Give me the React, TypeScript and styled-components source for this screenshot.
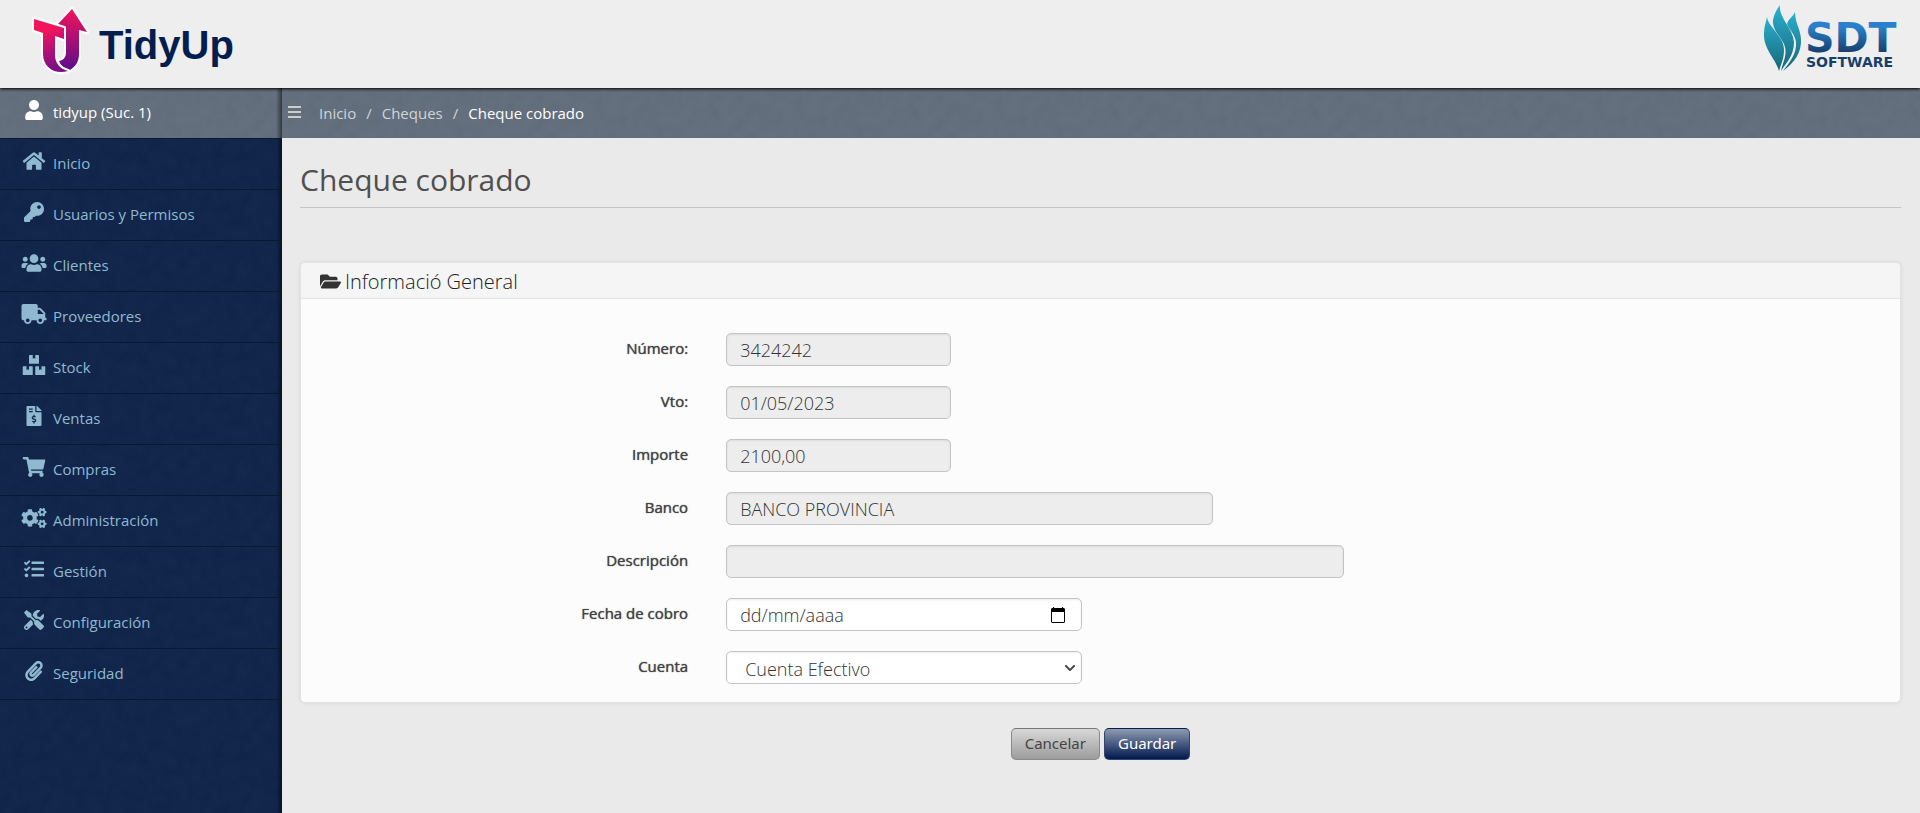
import React from 'react';
import styled, { createGlobalStyle } from 'styled-components';
import {
  FaUser, FaHome, FaKey, FaUsers, FaTruck, FaBoxes, FaFileInvoiceDollar,
  FaShoppingCart, FaCogs, FaTasks, FaTools, FaPaperclip, FaFolderOpen, FaChevronDown,
} from 'react-icons/fa';

const grain = (opacity: number) =>
  `url("data:image/svg+xml,${encodeURIComponent(
    `<svg xmlns='http://www.w3.org/2000/svg' width='200' height='200'><filter id='n'><feTurbulence type='fractalNoise' baseFrequency='.08' numOctaves='3' stitchTiles='stitch'/><feColorMatrix values='1 0 0 0 0 1 0 0 0 0 1 0 0 0 0 0 0 0 0 1'/></filter><rect width='200' height='200' filter='url(#n)' opacity='${opacity}'/></svg>`,
  )}")`;

const GlobalStyle = createGlobalStyle`
  *, *::before, *::after { box-sizing: border-box; }
  body {
    margin: 0;
    background: #eaeaea;
    color: #444;
    font-family: 'Open Sans', 'Noto Sans', sans-serif;
    font-size: 15px;
    line-height: 20px;
  }
  button, input, select { font-family: inherit; }
`;

const Page = styled.div`
  display: flex;
  flex-direction: column;
  min-height: 100vh;
`;

const Header = styled.header`
  position: relative;
  z-index: 1;
  display: flex;
  justify-content: space-between;
  align-items: flex-start;
  height: 88px;
  padding: 0 18px 0 28px;
  background: #eee;
  box-shadow: 0 1px 3px #000;
`;

const LogoLink = styled.a`
  display: block;
  svg { display: block; }
`;

const Body = styled.div`
  display: grid;
  grid-template-columns: 282px 1fr;
  flex: 1;
`;

const Sidebar = styled.aside`
  background-color: #0b2048;
  background-image: linear-gradient(to left, rgba(0, 0, 0, 0.55), transparent 6px), ${grain(0.035)};
`;

const Bar = styled.div`
  display: flex;
  align-items: center;
  height: 50px;
  padding-bottom: 1px;
  background-color: #5e6b79;
  background-image: ${grain(0.045)};
`;

const UserBar = styled(Bar)`
  padding: 0 0 2px 21px;
  color: #fff;
  background-image: linear-gradient(to left, rgba(0, 0, 0, 0.5), transparent 6px), ${grain(0.045)};
`;

const IconSlot = styled.span`
  display: flex;
  justify-content: center;
  width: 26px;
  margin-right: 6px;
  padding-bottom: 4px;
  svg { width: 26px; height: 20px; }
`;

const Menu = styled.ul`
  margin: 0;
  padding: 0;
  list-style: none;
`;

const MenuItem = styled.li`
  border-top: 1px solid #041c30;
  &:last-child { border-bottom: 1px solid #041c30; }
`;

const MenuLink = styled.a`
  display: flex;
  align-items: center;
  height: 50px;
  padding: 0 0 2px 21px;
  color: #8fb9d0;
  text-decoration: none;
`;

const Breadcrumb = styled.nav`
  display: flex;
  gap: 10px;
  color: #d0d4d8;
  a { color: inherit; text-decoration: none; }
`;

const Current = styled.span`
  color: #fff;
`;

const MenuButton = styled.button`
  display: flex;
  margin: 0 18px 0 6px;
  padding: 0;
  border: 0;
  background: none;
  color: #ccc;
`;

const Content = styled.main`
  padding: 22px 19px 20px 18px;
`;

const Title = styled.h1`
  margin: 0 0 54px;
  padding-bottom: 7px;
  border-bottom: 1px solid #c4c4c4;
  color: #505050;
  font-size: 30px;
  font-weight: 400;
  line-height: 40px;
`;

const Panel = styled.section`
  border: 1px solid #e2e2e2;
  border-radius: 5px;
  background: #fcfcfc;
  box-shadow: 0 0 4px rgba(0, 0, 0, 0.08);
`;

const PanelTitle = styled.h2`
  display: flex;
  align-items: center;
  gap: 4px;
  height: 36px;
  margin: 0;
  padding: 2px 19px 0;
  border-bottom: 1px solid #e2e2e2;
  border-radius: 5px 5px 0 0;
  background: #f5f5f5;
  color: #222;
  font-size: 20px;
  font-weight: 300;
  svg { width: 21px; height: 19px; color: #333; }
`;

const Fields = styled.div`
  display: grid;
  gap: 20px;
  padding: 34px 20px 18px;
`;

const Row = styled.div`
  display: grid;
  grid-template-columns: 7fr 22fr;
  column-gap: 38px;
`;

const Label = styled.label`
  padding-top: 5px;
  color: #444;
  text-align: right;
  text-shadow: 0 0 1px #444;
`;

const Control = styled.div<{ $width: number; $readOnly?: boolean }>`
  display: flex;
  align-items: center;
  width: 100%;
  max-width: ${(p) => p.$width}px;
  height: 33px;
  border: 1px solid #c4c4c4;
  border-radius: 5px;
  background: ${(p) => (p.$readOnly ? '#ededed' : '#fff')};
  box-shadow: inset 0 1px 2px rgba(0, 0, 0, 0.08);
`;

const Input = styled.input`
  flex: 1;
  min-width: 0;
  height: 31px;
  padding: 1px 13px 0;
  border: 0;
  outline: 0;
  background: none;
  color: #333;
  font-size: 18px;
  font-weight: 300;
  &::placeholder { color: #333; opacity: 1; }
`;

const PickerButton = styled.button`
  display: flex;
  margin-right: 16px;
  padding: 0;
  border: 0;
  background: none;
  color: #000;
`;

const SelectBox = styled.span`
  display: grid;
  flex: 1;
  align-items: center;
  select, svg { grid-area: 1 / 1; }
  svg { justify-self: end; margin-right: 5px; pointer-events: none; }
`;

const Select = styled.select`
  width: 100%;
  height: 31px;
  padding: 2px 18px 0;
  border: 0;
  outline: 0;
  appearance: none;
  background: none;
  color: #333;
  font-size: 18px;
  font-weight: 300;
`;

const Actions = styled.div`
  display: flex;
  justify-content: center;
  gap: 4px;
  margin-top: 25px;
`;

const Button = styled.button<{ $primary?: boolean }>`
  height: 32px;
  padding: 0 13px 2px;
  border: 1px solid ${(p) => (p.$primary ? '#33466b' : '#8a8a8a')};
  border-top-color: ${(p) => (p.$primary ? '#0a1e46' : '#777')};
  border-radius: 5px;
  background: ${(p) => (p.$primary
    ? 'linear-gradient(#8e9ab2, #01194c)'
    : 'linear-gradient(#d8d8d8, #9c9c9c)')};
  color: ${(p) => (p.$primary ? '#fff' : '#444')};
  font-family: 'Noto Sans', 'Open Sans', sans-serif;
  font-size: 15px;
`;

const TidyUpLogo = () => (
  <svg width="210" height="80" viewBox="28 0 210 80" role="img" aria-label="TidyUp">
    <defs>
      <linearGradient id="tu" x1="0" y1="0" x2="0.3" y2="1">
        <stop offset="0.3" stopColor="#f3145c" />
        <stop offset="1" stopColor="#7a0f86" />
      </linearGradient>
      <linearGradient id="arrow" x1="0" y1="0" x2="0" y2="1">
        <stop offset="0" stopColor="#f3145c" />
        <stop offset="1" stopColor="#5c0c8c" />
      </linearGradient>
    </defs>
    <g stroke="#fff" strokeWidth="4" strokeLinejoin="round" paintOrder="stroke">
      <path fill="url(#arrow)" d="M72 9L87 32L79 30V54C79 62 75 67 70 70C65 69 61 66 59 61C64 60 66 57 66 52V27L58 24Z" />
      <path fill="url(#tu)" d="M34 19L64 28V39L55 36V55C55 63 60 69 68 71C56 75 43 68 43 54V33L34 30Z" />
    </g>
    <text x="99" y="59" fill="#021d4e" fontFamily="'Liberation Sans', sans-serif" fontWeight="700" fontSize="40">TidyUp</text>
  </svg>
);

const SdtLogo = () => (
  <svg width="146" height="80" viewBox="1756 0 146 80" role="img" aria-label="SDT Software">
    <defs>
      <linearGradient id="flame" x1="0" y1="0" x2="0" y2="1">
        <stop offset="0" stopColor="#2bb0cf" />
        <stop offset="1" stopColor="#176577" />
      </linearGradient>
      <linearGradient id="sdt" gradientUnits="userSpaceOnUse" x1="0" y1="24" x2="0" y2="54">
        <stop offset="0.1" stopColor="#2a80cc" />
        <stop offset="1" stopColor="#163c68" />
      </linearGradient>
    </defs>
    <g fill="url(#flame)">
      <path d="M1767 17C1768 27 1784 36 1784 50C1784 59 1781 64 1779 71C1776 59 1763 49 1764 33C1764 27 1766 22 1767 17Z" />
      <path d="M1780 5C1778 17 1793 28 1794 42C1794 56 1786 63 1781 71C1783 62 1787 56 1785 47C1783 38 1772 31 1773 20C1774 14 1777 9 1780 5Z" />
      <path d="M1795 12C1795 24 1802 31 1801 43C1800 58 1789 66 1783 71C1790 62 1797 53 1796 42C1795 34 1788 28 1787 24C1788 19 1793 17 1795 12Z" />
    </g>
    <text fontFamily="'DejaVu Sans', sans-serif" fontWeight="700">
      <tspan x="1805" y="52" fill="url(#sdt)" fontSize="41">SDT</tspan>
      <tspan x="1806" y="67" fill="#173f68" fontSize="14">SOFTWARE</tspan>
    </text>
  </svg>
);

const menu = [
  { label: 'Inicio', Icon: FaHome },
  { label: 'Usuarios y Permisos', Icon: FaKey },
  { label: 'Clientes', Icon: FaUsers },
  { label: 'Proveedores', Icon: FaTruck },
  { label: 'Stock', Icon: FaBoxes },
  { label: 'Ventas', Icon: FaFileInvoiceDollar },
  { label: 'Compras', Icon: FaShoppingCart },
  { label: 'Administración', Icon: FaCogs },
  { label: 'Gestión', Icon: FaTasks },
  { label: 'Configuración', Icon: FaTools },
  { label: 'Seguridad', Icon: FaPaperclip },
];

const readOnlyFields = [
  { id: 'numero', label: 'Número:', value: '3424242', width: 225 },
  { id: 'vto', label: 'Vto:', value: '01/05/2023', width: 225 },
  { id: 'importe', label: 'Importe', value: '2100,00', width: 225 },
  { id: 'banco', label: 'Banco', value: 'BANCO PROVINCIA', width: 487 },
  { id: 'descripcion', label: 'Descripción', value: '', width: 618 },
];

export default function App() {
  return (
    <Page>
      <GlobalStyle />
      <Header>
        <LogoLink href="#"><TidyUpLogo /></LogoLink>
        <LogoLink href="#"><SdtLogo /></LogoLink>
      </Header>
      <Body>
        <Sidebar>
          <UserBar><IconSlot><FaUser /></IconSlot>tidyup (Suc. 1)</UserBar>
          <Menu>
            {menu.map(({ label, Icon }) => (
              <MenuItem key={label}>
                <MenuLink href="#"><IconSlot><Icon /></IconSlot>{label}</MenuLink>
              </MenuItem>
            ))}
          </Menu>
        </Sidebar>
        <div>
          <Bar>
            <MenuButton type="button" aria-label="Menú">
              <svg width="13" height="13" viewBox="0 0 13 13" fill="currentColor">
                <path d="M0 0h13v2H0zM0 5h13v2H0zM0 10h13v2H0z" />
              </svg>
            </MenuButton>
            <Breadcrumb aria-label="Ruta">
              <a href="#">Inicio</a><span>/</span><a href="#">Cheques</a><span>/</span><Current>Cheque cobrado</Current>
            </Breadcrumb>
          </Bar>
          <Content>
            <Title>Cheque cobrado</Title>
            <form>
              <Panel>
                <PanelTitle><FaFolderOpen />Informació General</PanelTitle>
                <Fields>
                  {readOnlyFields.map((f) => (
                    <Row key={f.id}>
                      <Label htmlFor={f.id}>{f.label}</Label>
                      <Control $width={f.width} $readOnly><Input id={f.id} defaultValue={f.value} readOnly /></Control>
                    </Row>
                  ))}
                  <Row>
                    <Label htmlFor="fecha">Fecha de cobro</Label>
                    <Control $width={356}>
                      <Input id="fecha" placeholder="dd/mm/aaaa" />
                      <PickerButton type="button" aria-label="Abrir calendario">
                        <svg width="14" height="16" viewBox="0 0 14 16">
                          <path fill="currentColor" fillRule="evenodd" d="M2 0h1v1h8V0h1v1h1l1 1v13l-1 1H1l-1-1V2l1-1h1zM1 5v10h12V5z" />
                        </svg>
                      </PickerButton>
                    </Control>
                  </Row>
                  <Row>
                    <Label htmlFor="cuenta">Cuenta</Label>
                    <Control $width={356}>
                      <SelectBox>
                        <Select id="cuenta"><option>Cuenta Efectivo</option></Select>
                        <FaChevronDown size={12} />
                      </SelectBox>
                    </Control>
                  </Row>
                </Fields>
              </Panel>
              <Actions>
                <Button type="button">Cancelar</Button>
                <Button type="submit" $primary>Guardar</Button>
              </Actions>
            </form>
          </Content>
        </div>
      </Body>
    </Page>
  );
}
